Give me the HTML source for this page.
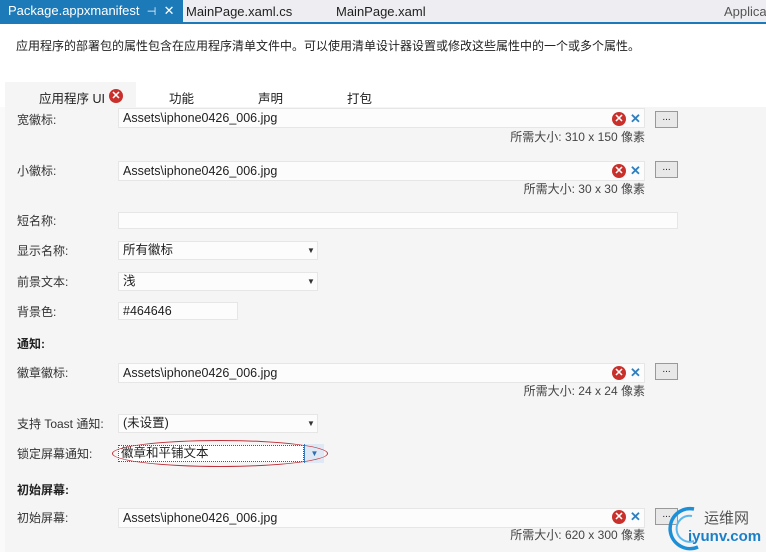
<!DOCTYPE html><html><head><meta charset="utf-8"><style>
*{margin:0;padding:0;box-sizing:border-box}
body{width:766px;height:552px;overflow:hidden;background:#f5f5f5;font-family:"Liberation Sans","Noto Sans CJK SC",sans-serif;font-size:12px;color:#1e1e1e;position:relative}
.a{position:absolute;white-space:nowrap}
.in{position:absolute;background:#fcfcfc;border:1px solid #e6e6e6;padding:0 0 0 4px;font-size:12.5px;height:20px;line-height:18px}
.lb{position:absolute;left:17px;font-size:12px;color:#333}
.btn{position:absolute;left:655px;width:23px;height:17px;border:1px solid #999;background:#e8e8e8;font-size:10px;text-align:center;line-height:12px}
.err{position:absolute;width:14px;height:14px;border-radius:50%;background:#c9302c;color:#fff;font-size:11px;font-weight:bold;text-align:center;line-height:14px}
.x{position:absolute;color:#2f7fbf;font-size:13px;font-weight:bold}
.sz{position:absolute;right:121px;font-size:12px;color:#444}
.dd{position:absolute;font-size:8px;color:#333}
</style></head><body>
<div class="a" style="left:0;top:0;width:766px;height:22px;background:#eeeef2"></div>
<div class="a" style="left:0;top:22px;width:766px;height:2px;background:#1c7ab8"></div>
<div class="a" style="left:0;top:0;width:183px;height:22px;background:#1c7ab8;color:#fff;font-size:13px;padding:3px 0 0 8px">Package.appxmanifest &nbsp;<span style="font-size:11px">⊣</span>&nbsp; ✕</div>
<div class="a" style="left:186px;top:4px;font-size:13px">MainPage.xaml.cs</div>
<div class="a" style="left:336px;top:4px;font-size:13px">MainPage.xaml</div>
<div class="a" style="left:724px;top:4px;font-size:13px;color:#555">Applica</div>
<div class="a" style="left:0;top:24px;width:766px;height:61px;background:#fff"></div>
<div class="a" style="left:16px;top:37px;font-size:12px">应用程序的部署包的属性包含在应用程序清单文件中。可以使用清单设计器设置或修改这些属性中的一个或多个属性。</div>
<div class="a" style="left:0;top:85px;width:766px;height:22px;background:#fff"></div>
<div class="a" style="left:5px;top:82px;width:131px;height:25px;background:#f5f5f5"></div>
<div class="a" style="left:39px;top:88px;font-size:12.5px">应用程序 UI</div>
<div class="err" style="left:109px;top:89px">✕</div>
<div class="a" style="left:169px;top:88px;font-size:12.5px">功能</div>
<div class="a" style="left:258px;top:88px;font-size:12.5px">声明</div>
<div class="a" style="left:347px;top:88px;font-size:12.5px">打包</div>
<div class="a" style="left:0;top:107px;width:5px;height:445px;background:#fafafa"></div>

<div class="lb" style="top:111px">宽徽标:</div>
<div class="in" style="left:118px;top:108px;width:527px">Assets\iphone0426_006.jpg</div>
<div class="err" style="left:612px;top:112px">✕</div><div class="x" style="left:630px;top:111px">✕</div>
<div class="btn" style="top:111px">...</div>
<div class="sz" style="top:128px">所需大小: 310 x 150 像素</div>

<div class="lb" style="top:162px">小徽标:</div>
<div class="in" style="left:118px;top:161px;width:527px">Assets\iphone0426_006.jpg</div>
<div class="err" style="left:612px;top:164px">✕</div><div class="x" style="left:630px;top:163px">✕</div>
<div class="btn" style="top:161px">...</div>
<div class="sz" style="top:180px">所需大小: 30 x 30 像素</div>

<div class="lb" style="top:212px">短名称:</div>
<div class="in" style="left:118px;top:212px;width:560px;height:17px"></div>

<div class="lb" style="top:242px">显示名称:</div>
<div class="in" style="left:118px;top:241px;width:200px;height:19px;line-height:17px">所有徽标</div><div class="dd" style="left:307px;top:246px">▼</div>
<div class="lb" style="top:273px">前景文本:</div>
<div class="in" style="left:118px;top:272px;width:200px;height:19px;line-height:17px">浅</div><div class="dd" style="left:307px;top:277px">▼</div>
<div class="lb" style="top:303px">背景色:</div>
<div class="in" style="left:118px;top:302px;width:120px;height:18px;line-height:16px">#464646</div>

<div class="lb" style="top:335px;font-weight:bold;color:#222">通知:</div>
<div class="lb" style="top:364px">徽章徽标:</div>
<div class="in" style="left:118px;top:363px;width:527px">Assets\iphone0426_006.jpg</div>
<div class="err" style="left:612px;top:366px">✕</div><div class="x" style="left:630px;top:365px">✕</div>
<div class="btn" style="top:363px">...</div>
<div class="sz" style="top:382px">所需大小: 24 x 24 像素</div>

<div class="lb" style="top:415px">支持 Toast 通知:</div>
<div class="in" style="left:118px;top:414px;width:200px;height:19px;line-height:17px">(未设置)</div><div class="dd" style="left:307px;top:419px">▼</div>
<div class="lb" style="top:445px">锁定屏幕通知:</div>
<div class="a" style="left:118px;top:445px;width:186px;height:17px;border:1px dotted #555;background:#fff;padding:0 0 0 2px;font-size:12.5px;line-height:15px">徽章和平铺文本</div>
<div class="a" style="left:304px;top:444px;width:20px;height:19px;background:#dfe9f5;border-left:1px solid #3d7bbf;font-size:8px;color:#2f6fb0;text-align:center;line-height:19px">▼</div>
<div class="a" style="left:112px;top:440px;width:216px;height:27px;border:1px solid #c0303a;border-radius:50%"></div>

<div class="lb" style="top:481px;font-weight:bold;color:#222">初始屏幕:</div>
<div class="lb" style="top:509px">初始屏幕:</div>
<div class="in" style="left:118px;top:508px;width:527px">Assets\iphone0426_006.jpg</div>
<div class="err" style="left:612px;top:510px">✕</div><div class="x" style="left:630px;top:509px">✕</div>
<div class="btn" style="top:508px">...</div>
<div class="sz" style="top:526px">所需大小: 620 x 300 像素</div>

<svg class="a" style="left:662px;top:505px" width="42" height="47"><path d="M32 4 A20 20 0 1 0 36 42" stroke="#1c8fd6" stroke-width="3.5" fill="none"/><path d="M30 11 A13 13 0 1 0 32 36" stroke="#5bb8ee" stroke-width="2" fill="none"/></svg>
<div class="a" style="left:704px;top:507px;font-size:15px;color:#555">运维网</div>
<div class="a" style="left:688px;top:528px;font-size:15px;font-weight:bold;color:#1b7fc8">iyunv.com</div>
</body></html>
